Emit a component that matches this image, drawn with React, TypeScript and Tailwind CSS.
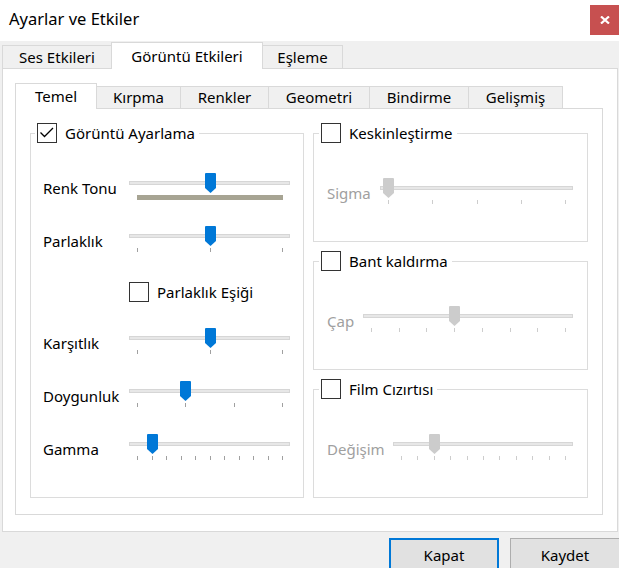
import React from 'react';

const font = "font-['Noto_Sans',sans-serif]";

type SliderProps = {
  width: number;
  at: number;
  ticks?: number;
  disabled?: boolean;
  hueBar?: boolean;
};

const Slider: React.FC<SliderProps> = ({ width, at, ticks = 0, disabled, hueBar }) => {
  const start = 8;
  const end = width - 8;
  const thumbX = Math.round(start + at * (end - start));
  const tickXs = Array.from({ length: ticks }, (_, i) => Math.round(start + (i * (end - start)) / (ticks - 1)));

  return (
    <div className="relative h-[32px] shrink-0" style={{ width }}>
      <div className="absolute left-0 right-0 top-[9px] h-[4px] bg-[#e7e7e7] border border-[#d6d6d6]" />
      {hueBar && (
        <div
          className="absolute top-[23px] h-[5px] bg-[#a7a493]"
          style={{ left: start, width: end - start + 1 }}
        />
      )}
      {tickXs.map((x) => (
        <div
          key={x}
          className={`absolute top-[23px] w-px h-[4px] ${disabled ? 'bg-[#cdcdcd]' : 'bg-[#a0a0a0]'}`}
          style={{ left: x }}
        />
      ))}
      <svg
        className="absolute top-[1px]"
        style={{ left: thumbX - 5 }}
        width="11"
        height="20"
        viewBox="0 0 11 20"
      >
        <path d="M0 1Q0 0 1 0H10Q11 0 11 1V15L5.5 20L0 15Z" fill={disabled ? '#cccccc' : '#0078d7'} />
      </svg>
    </div>
  );
};

const CheckBox: React.FC<{ checked?: boolean }> = ({ checked }) => (
  <div className="w-[20px] h-[20px] shrink-0 border border-[#333333] bg-white">
    {checked && (
      <svg width="18" height="18" viewBox="0 0 18 18">
        <polyline points="2.5,8.5 6.5,12.5 15,4" fill="none" stroke="#000" strokeWidth="1.3" />
      </svg>
    )}
  </div>
);

const Legend: React.FC<{ label: string; checked?: boolean; offset: string }> = ({ label, checked, offset }) => (
  <legend className={`${offset} pl-[2px] pr-[4px]`}>
    <span className="flex items-center gap-[8px] h-[20px] text-[15px] leading-[20px]">
      <CheckBox checked={checked} />
      {label}
    </span>
  </legend>
);

const SliderRow: React.FC<{ label: string; labelW: string; className?: string; disabled?: boolean } & SliderProps> = ({
  label,
  labelW,
  className = '',
  disabled,
  ...slider
}) => (
  <div className={`flex items-center h-[32px] ${className}`}>
    <span className={`${labelW} shrink-0 text-[15px] ${disabled ? 'text-[#a0a0a0]' : 'text-black'}`}>{label}</span>
    <Slider {...slider} disabled={disabled} />
  </div>
);

const outerTabs = [
  { label: 'Ses Etkileri', w: 'w-[110px]' },
  { label: 'Görüntü Etkileri', w: 'w-[152px]', active: true },
  { label: 'Eşleme', w: 'w-[81px]' },
];

const innerTabs = [
  { label: 'Temel', w: 'w-[82px]', active: true },
  { label: 'Kırpma', w: 'w-[85px]' },
  { label: 'Renkler', w: 'w-[89px]' },
  { label: 'Geometri', w: 'w-[102px]' },
  { label: 'Bindirme', w: 'w-[100px]' },
  { label: 'Gelişmiş', w: 'w-[95px]' },
];

export default function App() {
  return (
    <div className={`w-[619px] h-[568px] overflow-hidden bg-[#f0f0f0] text-black ${font}`}>
      {/* title bar */}
      <div className="h-[41px] bg-white flex items-start justify-between">
        <span className="pl-[9px] pt-[8px] text-[16.5px] leading-[22px]">Ayarlar ve Etkiler</span>
        <div className="mt-[5px] w-[29px] h-[30px] bg-[#c75050] flex items-center justify-center">
          <svg width="10" height="8" viewBox="0 0 10 8">
            <path d="M1 0.5L9 7.5M9 0.5L1 7.5" stroke="#fff" strokeWidth="2.2" />
          </svg>
        </div>
      </div>

      {/* outer tabs */}
      <div className="flex items-end h-[28px] pl-[2px]">
        {outerTabs.map((t, i) => (
          <div
            key={t.label}
            className={`${t.w} ${i > 0 ? '-ml-px' : ''} flex items-center justify-center text-[15px] border border-[#d9d9d9] ${
              t.active ? 'relative z-10 h-[27px] border-b-0 bg-white' : 'h-[24px] bg-[#f0f0f0]'
            }`}
          >
            {t.label}
          </div>
        ))}
      </div>

      <div className="-mt-px ml-[2px] w-[616px] h-[464px] bg-white border border-[#d9d9d9] pt-[14px] pl-[12px]">
        {/* inner tabs */}
        <div className="flex items-end h-[26px]">
          {innerTabs.map((t, i) => (
            <div
              key={t.label}
              className={`${t.w} ${i > 0 ? '-ml-px' : ''} flex items-center justify-center text-[15px] border border-[#d9d9d9] ${
                t.active ? 'relative z-10 h-[26px] border-b-0 bg-white' : 'h-[23px] bg-[#f0f0f0]'
              }`}
            >
              {t.label}
            </div>
          ))}
        </div>

        <div className="-mt-px w-[588px] h-[407px] border border-[#d9d9d9] flex gap-[9px] pt-[14px] pl-[14px]">
          {/* left group */}
          <fieldset className="w-[274px] h-[375px] border border-[#dcdcdc]">
            <Legend label="Görüntü Ayarlama" checked offset="ml-[4px]" />
            <div className="flex flex-col pl-[12px] pt-[29px]">
              <SliderRow label="Renk Tonu" labelW="w-[86px]" width={161} at={0.5} hueBar />
              <SliderRow label="Parlaklık" labelW="w-[86px]" width={161} at={0.5} ticks={3} className="mt-[21px]" />
              <div className="flex items-center gap-[8px] h-[20px] ml-[86px] mt-[25px] text-[15px]">
                <CheckBox />
                Parlaklık Eşiği
              </div>
              <SliderRow label="Karşıtlık" labelW="w-[86px]" width={161} at={0.5} ticks={3} className="mt-[25px]" />
              <SliderRow label="Doygunluk" labelW="w-[86px]" width={161} at={1 / 3} ticks={4} className="mt-[21px]" />
              <SliderRow label="Gamma" labelW="w-[86px]" width={161} at={0.1} ticks={11} className="mt-[21px]" />
            </div>
          </fieldset>

          {/* right column */}
          <div className="w-[275px] flex flex-col gap-[9px]">
            <fieldset className="h-[119px] border border-[#dcdcdc]">
              <Legend label="Keskinleştirme" offset="ml-[5px]" />
              <div className="pl-[13px] pt-[34px]">
                <SliderRow label="Sigma" labelW="w-[53px]" width={193} at={0} ticks={5} disabled />
              </div>
            </fieldset>
            <fieldset className="h-[119px] border border-[#dcdcdc]">
              <Legend label="Bant kaldırma" offset="ml-[5px]" />
              <div className="pl-[13px] pt-[34px]">
                <SliderRow label="Çap" labelW="w-[36px]" width={210} at={3 / 7} ticks={8} disabled />
              </div>
            </fieldset>
            <fieldset className="h-[119px] border border-[#dcdcdc]">
              <Legend label="Film Cızırtısı" offset="ml-[5px]" />
              <div className="pl-[13px] pt-[34px]">
                <SliderRow label="Değişim" labelW="w-[66px]" width={180} at={0.2} ticks={11} disabled />
              </div>
            </fieldset>
          </div>
        </div>
      </div>

      {/* buttons */}
      <div className="flex gap-[11px] pl-[389px] pt-[6px]">
        <button className="w-[110px] h-[34px] shrink-0 bg-[#e1e1e1] border-2 border-[#0078d7] text-[15px]">Kapat</button>
        <button className="w-[110px] h-[34px] shrink-0 bg-[#e1e1e1] border border-[#adadad] text-[15px]">Kaydet</button>
      </div>
    </div>
  );
}
